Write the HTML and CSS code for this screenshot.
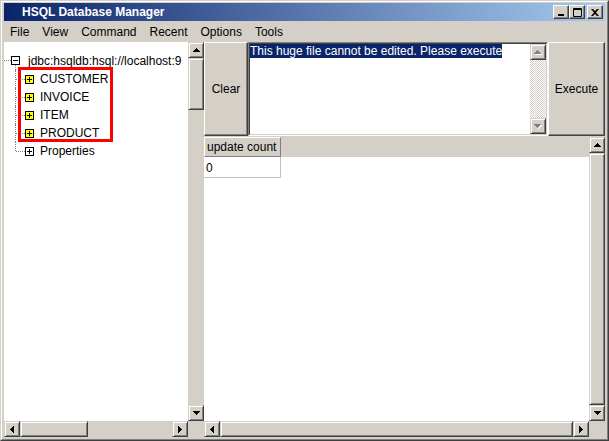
FILE: index.html
```html
<!DOCTYPE html>
<html>
<head>
<meta charset="utf-8">
<title>HSQL Database Manager</title>
<link rel="stylesheet" href="styles.css">
</head>
<body>
<div class="window">
  <div class="window-inner">
    <div class="titlebar">
      <span class="title">HSQL Database Manager</span>
      <div class="caption-btns">
        <span class="cap-btn"><svg width="8" height="7" viewBox="0 0 8 7"><rect x="1" y="5" width="6" height="2" fill="#000"/></svg></span>
        <span class="cap-btn"><svg width="9" height="9" viewBox="0 0 9 9"><path d="M0.5 0.5h8v8h-8z M0.5 1.5h8" fill="none" stroke="#000"/></svg></span>
        <span class="cap-btn close"><svg width="8" height="7" viewBox="0 0 8 7"><path d="M0 0h2l2 2 2-2h2L5 3.5 8 7H6L4 5 2 7H0l3-3.5z" fill="#000"/></svg></span>
      </div>
    </div>
    <div class="menubar">
      <span class="menu-item">File</span>
      <span class="menu-item">View</span>
      <span class="menu-item">Command</span>
      <span class="menu-item">Recent</span>
      <span class="menu-item">Options</span>
      <span class="menu-item">Tools</span>
    </div>
    <div class="content">
      <div class="left-pane">
        <div class="tree-view">
          <div class="tree-row root">
            <span class="root-line"></span>
            <svg class="tbox" width="9" height="9" viewBox="0 0 9 9"><rect x="0.5" y="0.5" width="8" height="8" fill="#fff" stroke="#000"/><path d="M2 4.5h5" stroke="#000"/></svg>
            <span class="tree-label root-label">jdbc:hsqldb:hsql://localhost:9</span>
          </div>
          <div class="tree-row child">
            <span class="conn"></span>
            <svg class="tbox" width="9" height="9" viewBox="0 0 9 9"><rect x="0.5" y="0.5" width="8" height="8" fill="#ffff00" stroke="#000"/><path d="M2 4.5h5M4.5 2v5" stroke="#000"/></svg>
            <span class="tree-label">CUSTOMER</span>
          </div>
          <div class="tree-row child">
            <span class="conn"></span>
            <svg class="tbox" width="9" height="9" viewBox="0 0 9 9"><rect x="0.5" y="0.5" width="8" height="8" fill="#ffff00" stroke="#000"/><path d="M2 4.5h5M4.5 2v5" stroke="#000"/></svg>
            <span class="tree-label">INVOICE</span>
          </div>
          <div class="tree-row child">
            <span class="conn"></span>
            <svg class="tbox" width="9" height="9" viewBox="0 0 9 9"><rect x="0.5" y="0.5" width="8" height="8" fill="#ffff00" stroke="#000"/><path d="M2 4.5h5M4.5 2v5" stroke="#000"/></svg>
            <span class="tree-label">ITEM</span>
          </div>
          <div class="tree-row child">
            <span class="conn"></span>
            <svg class="tbox" width="9" height="9" viewBox="0 0 9 9"><rect x="0.5" y="0.5" width="8" height="8" fill="#ffff00" stroke="#000"/><path d="M2 4.5h5M4.5 2v5" stroke="#000"/></svg>
            <span class="tree-label">PRODUCT</span>
          </div>
          <div class="tree-row child last">
            <span class="conn"></span>
            <svg class="tbox" width="9" height="9" viewBox="0 0 9 9"><rect x="0.5" y="0.5" width="8" height="8" fill="#fff" stroke="#000"/><path d="M2 4.5h5M4.5 2v5" stroke="#000"/></svg>
            <span class="tree-label">Properties</span>
          </div>
          <div class="highlight"></div>
        </div>
        <div class="vscroll">
          <span class="sb-btn"><svg width="7" height="4" viewBox="0 0 7 4"><path d="M3 0h1v1h1v1h1v1h1v1H0V3h1V2h1V1h1z" fill="#000"/></svg></span>
          <span class="thumb v-thumb-left"></span>
          <span class="trough"></span>
          <span class="sb-btn"><svg width="7" height="4" viewBox="0 0 7 4"><path d="M0 0h7v1H6v1H5v1H4v1H3V3H2V2H1V1H0z" fill="#000"/></svg></span>
        </div>
        <div class="hscroll">
          <span class="sb-btn"><svg width="4" height="7" viewBox="0 0 4 7"><path d="M3 0h1v7H3V6H2V5H1V4H0V3h1V2h1V1h1z" fill="#000"/></svg></span>
          <span class="thumb h-thumb-left"></span>
          <span class="trough"></span>
          <span class="sb-btn"><svg width="4" height="7" viewBox="0 0 4 7"><path d="M0 0h1v1h1v1h1v1h1v1H3v1H2v1H1v1H0z" fill="#000"/></svg></span>
        </div>
        <div class="corner"></div>
      </div>
      <div class="right-pane">
        <div class="editor-row">
          <button class="btn btn-clear">Clear</button>
          <div class="ta-outer">
            <div class="ta-inner">
              <div class="ta-text"><span class="sel">This huge file cannot be edited. Please execute</span></div>
              <div class="vscroll disabled">
                <span class="sb-btn"><svg width="8" height="5" viewBox="0 0 8 5"><path d="M4 1h1v1h1v1h1v1h1v1H1V4h1V3h1V2h1z" fill="#fff"/><path d="M3 0h1v1h1v1h1v1h1v1H0V3h1V2h1V1h1z" fill="#808080"/></svg></span>
                <span class="trough dither"></span>
                <span class="sb-btn"><svg width="8" height="5" viewBox="0 0 8 5"><path d="M1 1h7v1H7v1H6v1H5v1H4V4H3V3H2V2H1z" fill="#fff"/><path d="M0 0h7v1H6v1H5v1H4v1H3V3H2V2H1V1H0z" fill="#808080"/></svg></span>
              </div>
            </div>
          </div>
          <button class="btn btn-exec">Execute</button>
        </div>
        <div class="results">
          <div class="table-view">
            <div class="thead">
              <div class="th">update count</div>
            </div>
            <div class="trow">
              <div class="td">0</div>
            </div>
          </div>
          <div class="vscroll">
            <span class="sb-btn"><svg width="7" height="4" viewBox="0 0 7 4"><path d="M3 0h1v1h1v1h1v1h1v1H0V3h1V2h1V1h1z" fill="#000"/></svg></span>
            <span class="thumb fill"></span>
            <span class="sb-btn"><svg width="7" height="4" viewBox="0 0 7 4"><path d="M0 0h7v1H6v1H5v1H4v1H3V3H2V2H1V1H0z" fill="#000"/></svg></span>
          </div>
          <div class="hscroll">
            <span class="sb-btn"><svg width="4" height="7" viewBox="0 0 4 7"><path d="M3 0h1v7H3V6H2V5H1V4H0V3h1V2h1V1h1z" fill="#000"/></svg></span>
            <span class="thumb fill"></span>
            <span class="sb-btn"><svg width="4" height="7" viewBox="0 0 4 7"><path d="M0 0h1v1h1v1h1v1h1v1H3v1H2v1H1v1H0z" fill="#000"/></svg></span>
          </div>
          <div class="corner"></div>
        </div>
      </div>
    </div>
  </div>
</div>
</body>
</html>
```
FILE: styles.css
```css
* { box-sizing: border-box; }
html, body { margin: 0; padding: 0; }
body {
  width: 609px;
  height: 441px;
  overflow: hidden;
  background: #d4d0c8;
  font-family: "Liberation Sans", Arial, sans-serif;
  font-size: 12px;
  color: #000;
}
.window {
  width: 609px;
  height: 441px;
  display: flex;
  flex-direction: column;
  background: #d4d0c8;
  border: 1px solid;
  border-color: #d4d0c8 #404040 #404040 #d4d0c8;
}
.window-inner {
  flex: 1;
  min-height: 0;
  display: flex;
  flex-direction: column;
  border: 1px solid;
  border-color: #fff #808080 #808080 #fff;
  padding: 1px 2px 2px 2px;
}
.titlebar {
  height: 18px;
  flex: none;
  display: flex;
  align-items: center;
  justify-content: space-between;
  padding: 0 2px 0 18px;
  background: linear-gradient(to right, #0a246a, #a6caf0);
}
.title {
  color: #fff;
  font-weight: bold;
  font-size: 12px;
}
.caption-btns { display: flex; }
.cap-btn {
  width: 16px;
  height: 14px;
  display: flex;
  align-items: center;
  justify-content: center;
  background: #d4d0c8;
  border: 1px solid;
  border-color: #fff #404040 #404040 #fff;
  box-shadow: inset -1px -1px #808080;
}
.cap-btn.close { margin-left: 2px; }
.menubar {
  height: 20px;
  flex: none;
  display: flex;
  align-items: center;
  gap: 1px;
  padding-top: 1px;
}
.menu-item { padding: 0 6px; }
.content {
  flex: 1;
  min-height: 0;
  display: flex;
  margin-top: 1px;
}
.left-pane {
  width: 200px;
  flex: none;
  display: grid;
  grid-template-columns: 184px 16px;
  grid-template-rows: 379px 16px;
}
.tree-view {
  background: #fff;
  position: relative;
  overflow: hidden;
  padding-top: 9px;
}
.tree-row {
  display: flex;
  align-items: center;
  height: 18px;
  position: relative;
  white-space: nowrap;
}
.tree-row.root { height: 19px; }
.root-line {
  width: 7px;
  height: 0;
  border-top: 1px dotted #808080;
}
.tree-row.root::after {
  content: "";
  position: absolute;
  left: 11px;
  top: 14px;
  bottom: 0;
  border-left: 1px dotted #808080;
}
.root-label { margin-left: 8px; }
.conn {
  width: 21px;
  height: 18px;
  position: relative;
  flex: none;
}
.conn::before {
  content: "";
  position: absolute;
  left: 11px;
  top: 0;
  bottom: 0;
  border-left: 1px dotted #808080;
}
.last .conn::before { bottom: 9px; }
.conn::after {
  content: "";
  position: absolute;
  left: 12px;
  top: 9px;
  width: 9px;
  border-top: 1px dotted #808080;
}
.tbox { flex: none; display: block; }
.child .tree-label { margin-left: 6px; }
.highlight {
  position: absolute;
  left: 14px;
  top: 25px;
  width: 95px;
  height: 75px;
  border: 3px solid #f00;
}
.vscroll {
  display: flex;
  flex-direction: column;
  width: 16px;
  background: #d4d0c8;
}
.hscroll {
  display: flex;
  height: 16px;
  background: #d4d0c8;
}
.sb-btn {
  width: 16px;
  height: 16px;
  flex: none;
  display: flex;
  align-items: center;
  justify-content: center;
  background: #d4d0c8;
  border: 1px solid;
  border-color: #d4d0c8 #404040 #404040 #d4d0c8;
  box-shadow: inset 1px 1px #fff, inset -1px -1px #808080;
}
.sb-btn svg { display: block; }
.thumb {
  flex: none;
  background: #d4d0c8;
  border: 1px solid;
  border-color: #d4d0c8 #404040 #404040 #d4d0c8;
  box-shadow: inset 1px 1px #fff, inset -1px -1px #808080;
}
.thumb.fill { flex: 1; }
.v-thumb-left { height: 52px; }
.h-thumb-left { width: 68px; }
.trough { flex: 1; background: #d4d0c8; }
.trough.dither {
  background-color: #d4d0c8;
  background-image: repeating-conic-gradient(#fff 0 25%, #d4d0c8 0 50%);
  background-size: 2px 2px;
}
.corner { background: #d4d0c8; }
.right-pane {
  width: 401px;
  flex: none;
  display: flex;
  flex-direction: column;
  gap: 1px;
}
.editor-row {
  height: 94px;
  flex: none;
  display: flex;
}
.btn {
  font-family: "Liberation Sans", Arial, sans-serif;
  font-size: 12px;
  color: #000;
  background: #d4d0c8;
  border: 1px solid;
  border-color: #fff #404040 #404040 #fff;
  box-shadow: inset -1px -1px #808080;
  padding: 0;
  margin: 0;
}
.btn-clear { width: 44px; }
.btn-exec { width: 57px; }
.ta-outer {
  width: 300px;
  border: 1px solid;
  border-color: #808080 #fff #fff #808080;
}
.ta-inner {
  height: 100%;
  display: flex;
  border: 1px solid;
  border-color: #404040 #d4d0c8 #d4d0c8 #404040;
}
.ta-text {
  flex: 1;
  background: #fff;
  line-height: 14px;
  white-space: nowrap;
  overflow: hidden;
}
.sel {
  background: #0a246a;
  color: #fff;
}
.results {
  flex: 1;
  display: grid;
  grid-template-columns: 385px 16px;
  grid-template-rows: 284px 16px;
}
.table-view {
  background: #fff;
  overflow: hidden;
}
.thead {
  height: 20px;
  background: #d4d0c8;
  display: flex;
}
.th {
  width: 77px;
  height: 20px;
  line-height: 18px;
  padding-left: 2px;
  border: 1px solid;
  border-color: #fff #808080 #808080 #fff;
  white-space: nowrap;
}
.trow { display: flex; height: 21px; }
.td {
  width: 77px;
  height: 21px;
  line-height: 20px;
  padding-left: 2px;
  padding-top: 1px;
  border-right: 1px solid #c0c0c0;
  border-bottom: 1px solid #c0c0c0;
}
```
